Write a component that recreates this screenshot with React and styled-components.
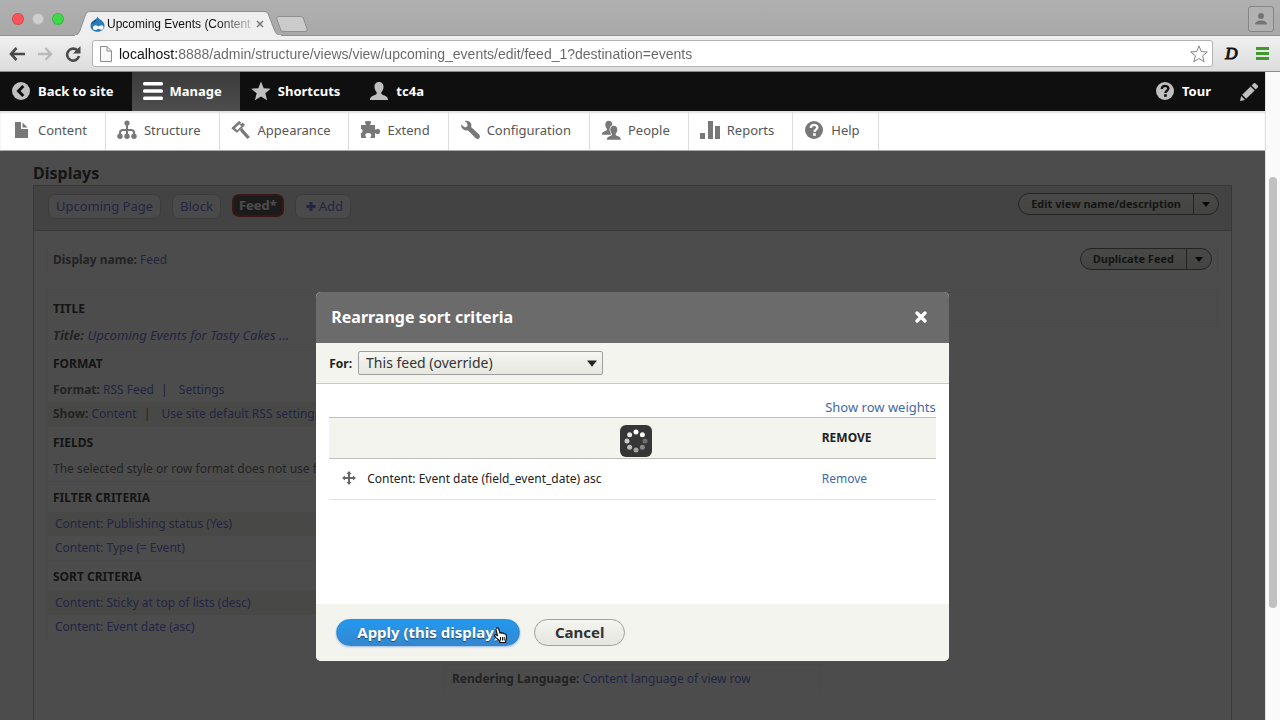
import React from 'react';
import styled, { createGlobalStyle, css } from 'styled-components';

const GlobalStyle = createGlobalStyle`
    * {
        box-sizing: border-box;
    }

    body {
        margin: 0;
        font-family: 'Noto Sans', 'Open Sans', sans-serif;
        font-size: 12px;
        color: #222;
    }

    button,
    input,
    select {
        font: inherit;
        margin: 0;
    }

    button {
        border: 0;
        padding: 0;
        background: none;
        cursor: pointer;
    }

    a {
        text-decoration: none;
    }

    svg {
        display: block;
        flex: none;
    }
`;

/* ---------- Browser window ---------- */

const Window = styled.div`
    display: flex;
    flex-direction: column;
    height: 100vh;
    overflow: hidden;
    background: #fff;
`;

const TabStrip = styled.div`
    display: flex;
    align-items: flex-end;
    height: 36px;
    padding: 0 6px 0 12px;
    background: linear-gradient(#b0b0b0, #a8a8a8);
    box-shadow: inset 0 -1px #8e8e8e;
    font-family: 'Liberation Sans', Arial, sans-serif;
`;

const Lights = styled.div`
    display: flex;
    gap: 8px;
    margin-bottom: 11px;
    width: 62px;
`;

const Light = styled.button`
    width: 12px;
    height: 12px;
    border-radius: 50%;
    background: ${(props) => props.$color};
    box-shadow: 0 0 0 1px rgba(0, 0, 0, 0.12) inset;
`;

const Tab = styled.div`
    position: relative;
    display: flex;
    align-items: center;
    width: 208px;
    height: 25px;
    padding: 0 18px 0 16px;
    gap: 2px;

    > svg.shape {
        position: absolute;
        inset: 0;
    }

    > *:not(.shape) {
        position: relative;
    }

    .title {
        flex: 1;
        white-space: nowrap;
        font-size: 12px;
        line-height: 16px;
        color: #111;
        mask-image: linear-gradient(to right, #000 75%, rgba(0, 0, 0, 0.2) 98%);
    }
`;

const NewTab = styled.button`
    margin: 0 auto 4px -6px;
`;

const Profile = styled.button`
    display: flex;
    align-items: center;
    justify-content: center;
    width: 26px;
    height: 26px;
    margin-bottom: 4px;
    border: 1px solid #858585;
    border-radius: 3px;
    background: #b1b1b1;
`;

const NavBar = styled.div`
    display: flex;
    align-items: center;
    height: 36px;
    padding: 0 11px 0 8px;
    background: linear-gradient(#f0f0f0, #dcdcdc);
    border-bottom: 1px solid #8a8a8a;

    .nav {
        width: 28px;
        display: flex;
    }
`;

const Address = styled.div`
    display: flex;
    align-items: center;
    flex: 1;
    height: 27px;
    padding: 0 4px 0 7px;
    gap: 7px;
    background: #fff;
    border: 1px solid #b3b3b3;
    border-radius: 3px;

    input {
        flex: 1;
        min-width: 0;
        padding: 0;
        border: 0;
        outline: 0;
        font-family: 'Liberation Sans', Arial, sans-serif;
        font-size: 14px;
        color: transparent;
        background: linear-gradient(to right, #111 59px, #666 59px);
        background-clip: text;
    }
`;

const Extension = styled.button`
    width: 43px;
    padding-right: 6px;
    font-family: 'Liberation Serif', serif;
    font-size: 17px;
    font-style: italic;
    line-height: 20px;
    color: #111;
    -webkit-text-stroke: 1px #111;
`;

const Viewport = styled.div`
    display: flex;
    flex: 1;
    min-height: 0;
`;

const Scrollbar = styled.div`
    display: grid;
    grid-template-rows: 105fr 431fr 112fr;
    width: 15px;
    padding: 0 3px;
    background: #fafafa;
    border-left: 1px solid #e2e2e2;

    div {
        grid-row: 2;
        border-radius: 4px;
        background: #c1c1c1;
    }
`;

const Page = styled.div`
    display: flex;
    flex-direction: column;
    flex: 1;
    min-width: 0;
`;

/* ---------- Admin toolbar ---------- */

const Toolbar = styled.nav`
    display: flex;
    height: 39px;
    flex: none;
    background: #0f0f0f;
`;

const ToolbarItem = styled.a`
    display: flex;
    align-items: center;
    gap: 7px;
    padding: 0 18px 1px 11px;
    color: #fff;
    font-size: 13px;
    font-weight: bold;
    white-space: nowrap;

    svg {
        color: ${(props) => (props.$active ? '#fff' : '#bfbfbf')};
    }

    ${(props) =>
        props.$active &&
        css`
            background: linear-gradient(#3a3a3a, #4e4e4e);
        `}

    ${(props) =>
        props.$right &&
        css`
            margin-left: auto;
        `}
`;

const PencilItem = styled.button`
    padding: 0 6px 0 10px;
    color: #bfbfbf;
`;

const Tray = styled.nav`
    position: relative;
    display: flex;
    height: 40px;
    flex: none;
    background: #fff;
    border-bottom: 1px solid #aaa;
    box-shadow: inset 0 2px 2px rgba(0, 0, 0, 0.12);
`;

const TrayItem = styled.a`
    display: flex;
    align-items: center;
    gap: 7px;
    padding: 0 18px 1px 11px;
    border-right: 1px solid #ddd;
    color: #565656;
    font-size: 13px;
    white-space: nowrap;

    svg {
        color: #787878;
    }
`;

/* ---------- Views edit form ---------- */

const Main = styled.main`
    position: relative;
    flex: 1;
    min-height: 0;
    overflow: hidden;
    padding: 11px 33px 0;

    h1 {
        margin: 0;
        font-size: 16px;
        line-height: 23px;
        color: #464646;
    }

    a {
        color: #747ce0;
    }
`;

const Displays = styled.section`
    min-height: 100%;
    border: 1px solid #bbb;
`;

const DisplayBar = styled.div`
    display: flex;
    align-items: flex-start;
    gap: 11px;
    padding: 7px 12px 0 14px;
    height: 45px;
    background: #e0e0e0;
    border-bottom: 1px solid #bbb;
`;

const DisplayTab = styled.button`
    display: flex;
    align-items: center;
    gap: 3px;
    height: 25px;
    margin-top: 1px;
    padding: 0 7px 1px;
    border: 1px solid #ccc;
    border-radius: 7px;
    background: #f9f9f9;
    color: #747ce0;
    font-size: 13px;
    white-space: nowrap;

    ${(props) =>
        props.$active &&
        css`
            height: 23px;
            border: 2px solid #c54a43;
            padding: 0 5px 1px;
            background: #5a5a5a;
            color: #fff;
            font-weight: bold;
        `}
`;

const DropButton = styled.div`
    display: flex;
    height: 22px;
    margin-left: auto;
    border: 1px solid #777;
    border-radius: 11px;
    background: linear-gradient(#f3f3ee, #e2e2da);
    color: #4a4a4a;

    button {
        padding: 0 12px 1px;
        color: inherit;
        font-size: 11px;
        font-weight: bold;
        white-space: nowrap;
    }

    button + button {
        display: flex;
        align-items: center;
        padding: 0 8px;
        border-left: 1px solid #777;
    }
`;

const DisplayName = styled.div`
    display: flex;
    align-items: flex-start;
    height: 24px;
    margin: 17px 13px 0;
    padding-right: 5px;
    border: solid #f2f2f2;
    border-width: 0 1px;
`;

const Columns = styled.div`
    display: grid;
    grid-template-columns: repeat(3, 1fr);
    gap: 20px;
    margin: 20px 13px 0;
`;

const Column = styled.div`
    display: flex;
    flex-direction: column;
    justify-content: ${(props) => (props.$bottom ? 'flex-end' : 'flex-start')};
    min-height: 399px;
    min-width: 0;
`;

const Bucket = styled.section`
    border: 1px solid #f4f4f4;
    border-bottom: 0;
    padding-top: 2px;

    h2 {
        margin: 0;
        padding-left: 5px;
        font-size: 12px;
        line-height: 28px;
        text-transform: uppercase;
        color: #464646;
    }
`;

const EmptyBucket = styled.section`
    height: 32px;
    border: 1px solid #f4f4f4;
`;

const Setting = styled.div`
    height: 24px;
    padding: 0 ${(props) => (props.$indent ? 7 : 5)}px;
    overflow: hidden;
    white-space: nowrap;
    line-height: 24px;
    color: #757575;
    background: ${(props) => (props.$shaded ? '#f2f4ee' : 'transparent')};

    ${(props) =>
        props.$italic &&
        css`
            font-size: 13px;
            font-style: italic;
        `}

    .bar {
        margin: 0 8px 0 4px;
    }
`;

/* ---------- Modal ---------- */

const Overlay = styled.div`
    position: absolute;
    inset: 0;
    display: flex;
    justify-content: center;
    align-items: flex-start;
    padding-top: 141px;
    background: rgba(0, 0, 0, 0.7);
`;

const Dialog = styled.div`
    width: 50%;
    min-width: 480px;
    border-radius: 5px;
    overflow: hidden;
    background: #fff;

    a {
        color: #3f69a5;
    }
`;

const DialogHeader = styled.header`
    display: flex;
    align-items: center;
    justify-content: space-between;
    height: 51px;
    padding: 0 21px 2px 15px;
    background: #6b6b6b;
    color: #fff;

    h2 {
        margin: 0;
        font-size: 16px;
    }
`;

const OverrideBar = styled.div`
    display: flex;
    align-items: center;
    gap: 6px;
    height: 41px;
    padding: 0 13px;
    background: #f3f4ee;
    border-bottom: 1px solid #c9cac5;

    label {
        font-weight: bold;
    }
`;

const SelectBox = styled.div`
    position: relative;

    select {
        appearance: none;
        display: block;
        width: 245px;
        height: 24px;
        padding: 0 24px 1px 7px;
        border: 1px solid #a0a0a0;
        border-radius: 2px;
        background: linear-gradient(#f6f6f3, #e7e7df);
        color: #333;
        font-size: 14px;
    }

    svg {
        position: absolute;
        right: 6px;
        top: 9px;
        pointer-events: none;
    }
`;

const DialogContent = styled.div`
    position: relative;
    height: 220px;
    padding: 13px 13px 0;

    .weights {
        display: block;
        text-align: right;
        font-size: 13px;
        line-height: 20px;
    }
`;

const SortTable = styled.table`
    width: 100%;
    border-collapse: collapse;

    th,
    td {
        height: 41px;
        padding: 0 0 2px;
        text-align: left;
        border-bottom: 1px solid #e0e0e0;
    }

    th {
        border: solid #bfbfba;
        border-width: 1px 0;
        background: #f3f4ee;
        text-transform: uppercase;
    }

    th:last-child {
        width: 114px;
    }

    .field {
        display: flex;
        align-items: center;
        gap: 11px;
        padding-left: 13px;
    }
`;

const Throbber = styled.div`
    position: absolute;
    left: 48%;
    top: 41px;
    width: 32px;
    height: 32px;
    border-radius: 6px;
    background: #363636;
`;

const DialogFooter = styled.footer`
    display: flex;
    align-items: center;
    gap: 14px;
    height: 57px;
    padding: 0 20px;
    background: #f3f4ee;
`;

const ActionButton = styled.button`
    position: relative;
    height: 27px;
    padding: 0 20px 1px;
    border: 1px solid #a0a09c;
    border-radius: 14px;
    background: linear-gradient(#f5f5f1, #e6e6df);
    color: #333;
    font-size: 15px;
    font-weight: bold;
    line-height: 24px;
    white-space: nowrap;

    ${(props) =>
        props.$primary &&
        css`
            border-color: #2a8bd3;
            background: linear-gradient(#2398ee, #3587cf);
            color: #fff;
            text-shadow: 0 1px 1px rgba(0, 0, 0, 0.5);
            box-shadow: 0 1px 2px rgba(70, 130, 220, 0.5);
        `}

    svg {
        position: absolute;
        right: 12px;
        top: 7px;
    }
`;

/* ---------- Icons ---------- */

const Icon = ({ size = 20, children }) => (
    <svg width={size} height={size} viewBox="0 0 20 20" fill="currentColor">
        {children}
    </svg>
);

const PersonShape = () => (
    <path d="M10 1c3 0 4.600 2.200 4.500 5-.1 2.400-1.100 4-2.100 5.300-.5 1 .1 1.900 1.200 2.400 2.600 1.100 5.400 1.700 5.400 5.300H1c0-3.600 2.800-4.200 5.400-5.300 1.100-.5 1.700-1.400 1.200-2.400C6.600 10 5.600 8.400 5.500 6 5.400 3.200 7 1 10 1z" />
);

const QuestionShape = ({ hole }) => (
    <>
        <circle cx="10" cy="10" r="9" />
        <path
            d="M6.800 8c0-2 1.400-3.100 3.300-3.100S13.400 6 13.400 7.600c0 2-2.900 2.200-2.900 4.400"
            fill="none"
            stroke={hole}
            strokeWidth="2.400"
        />
        <rect x="9.100" y="13.200" width="2.700" height="2.600" fill={hole} />
    </>
);

const BackIcon = () => (
    <Icon>
        <circle cx="10" cy="10" r="9" />
        <path
            d="M12.300 5L7.500 10l4.800 5"
            fill="none"
            stroke="#0f0f0f"
            strokeWidth="3"
        />
    </Icon>
);

const MenuIcon = () => (
    <Icon>
        <rect y="1" width="20" height="3.500" rx="1.500" />
        <rect y="8.300" width="20" height="3.500" rx="1.500" />
        <rect y="15.500" width="20" height="3.500" rx="1.500" />
    </Icon>
);

const StarIcon = () => (
    <Icon>
        <path d="M10 .5l2.700 6.700 7 .5-5.400 4.600 1.800 7L10 15.500l-6.100 3.800 1.800-7L.3 7.700l7-.5z" />
    </Icon>
);

const PencilIcon = () => (
    <Icon>
        <path d="M1 19l1.200-5 3.900 3.900zM3.200 12.800L11.600 4.400l4 4-8.400 8.400zM12.600 3.400l2-2c.6-.6 1.300-.6 1.900 0l2.200 2.200c.6.6.6 1.300 0 1.900l-2 2z" />
    </Icon>
);

const ContentIcon = () => (
    <Icon>
        <path d="M4 2h6v7h7v9H4z" />
        <path d="M11.500 2.500l5 5h-5z" />
    </Icon>
);

const StructureIcon = () => (
    <Icon>
        <circle cx="10" cy="3" r="2.600" />
        <path
            d="M10 4v12M3 16v-3.500Q3 10 6 10h8q3 0 3 2.500V16"
            fill="none"
            stroke="currentColor"
            strokeWidth="2"
        />
        <circle cx="3" cy="16.300" r="2.700" />
        <circle cx="10" cy="16.300" r="2.700" />
        <circle cx="17" cy="16.300" r="2.700" />
    </Icon>
);

const AppearanceIcon = () => (
    <Icon>
        <path
            d="M.8 8.300L8 1.500l1.500 1-1 1.200 1.800.5 1.200-1.200 2 2.100L6 12.300z"
            stroke="currentColor"
            strokeWidth="1"
        />
        <path d="M4 8.300L8.300 4.300l2 1.900L6.200 10.200z" fill="#fff" />
        <path
            d="M10 9l1.700 2.400 6 6.600"
            fill="none"
            stroke="currentColor"
            strokeWidth="3.200"
        />
    </Icon>
);

const ExtendIcon = () => (
    <Icon>
        <path d="M1 5h4.800c.4-1-.8-1.600-.8-2.800C5 1 6 1 8 1s3 0 3 1.200c0 1.200-1.200 1.800-.8 2.800H15v4.500c1 .5 1.500-.8 2.700-.8 1.500 0 2.300 1 2.300 2.800s-.8 2.700-2.300 2.700c-1.200 0-1.700-1.200-2.700-.8V18h-4.500c-.5-1 .8-1.500.8-2.800 0-1.400-1.200-2.200-3-2.200s-3 .8-3 2.200c0 1.300 1.300 1.800.8 2.800H1v-5c1 0 1.500-.8 1.500-2S2 9 1 9z" />
    </Icon>
);

const WrenchIcon = () => (
    <Icon>
        <path d="M1 4.600L5.200 7.600 7.600 6 7 2.800 4.600 1c3-.8 6 .5 6.700 3.200.2 1 .1 2-.2 2.800l8 7.600c1.200 1.300 1 2.800 0 3.700s-2.600.8-3.600-.4l-7.700-7.600C4.500 11.200 1 9 1 4.600z" />
    </Icon>
);

const PeopleIcon = () => (
    <Icon>
        <g transform="scale(.78)">
            <PersonShape />
        </g>
        <g transform="translate(5 5) scale(.78)" stroke="#fff" strokeWidth="2">
            <PersonShape />
        </g>
        <g transform="translate(5 5) scale(.78)">
            <PersonShape />
        </g>
    </Icon>
);

const ReportsIcon = () => (
    <Icon>
        <rect x="0" y="13" width="5" height="6" />
        <rect x="8" y="1" width="5" height="18" />
        <rect x="15" y="6" width="5" height="13" />
    </Icon>
);

const DropIcon = () => (
    <svg width="15" height="16" viewBox="0 0 15 16">
        <path
            d="M7.500.5c.5 1.800 2 2.500 3.800 3.700 2 1.400 3.200 3.200 3.200 5.500 0 3.500-3 6-7 6s-7-2.500-7-6c0-2.300 1.200-4 3.200-5.300C5.500 3.200 7 2.500 7.500.5z"
            fill="#2a7cba"
        />
        <path d="M1 8.500C1.500 6 5 4.800 6.500 3 6 6 3 7 1 8.500z" fill="#0f4f83" />
        <path
            d="M3 11.700c0-1.600 1.200-2.500 2.600-2.500 1.500 0 2.200 1.200 3 1.200s1.500-1.200 2.800-1.200 2.100.9 2.100 2.300-1 2.300-2.200 2.300c-1.200 0-1.800-1-2.700-1s-1.700 1.200-3.200 1.200S3 13.200 3 11.700z"
            fill="#fff"
        />
    </svg>
);

const Caret = ({ width = 8, height = 5 }) => (
    <svg width={width} height={height} viewBox="0 0 8 5" fill="#222">
        <path d="M0 0h8L4 5z" />
    </svg>
);

const HandCursor = () => (
    <svg width="13" height="17" viewBox="0 0 13 17">
        <path
            d="M2.500 1c1-.5 1.800 0 2.200 1L6 6c.8-.7 1.500-.4 2 .3.700-.6 1.500-.3 2 .5 1.200-.3 2 .4 2.300 1.700.4 2 .2 3.500-.6 5v2H5.700v-1.700L2 10.600C1 9.500 0 8.700.7 8 1.600 7.300 2.700 8 3.600 9L2 3c-.2-.8 0-1.600.5-2z"
            fill="#fff"
            stroke="#111"
            strokeWidth="1.200"
        />
        <path d="M6.500 10v3.500M8.500 10v3.500M10.200 10v3.500" stroke="#111" strokeWidth="1" />
    </svg>
);

const THROBBER_DOTS = ['#fff', '#fff', '#6e6e6e', '#858585', '#a3a3a3', '#bbb', '#ccc', '#e6e6e6'];

const ThrobberDots = () => (
    <svg width="32" height="32" viewBox="0 0 32 32">
        {THROBBER_DOTS.map((fill, index) => {
            const angle = (index * Math.PI) / 4;
            return (
                <circle
                    key={index}
                    cx={16 + 9 * Math.sin(angle)}
                    cy={16 - 9 * Math.cos(angle)}
                    r="2.500"
                    fill={fill}
                />
            );
        })}
    </svg>
);

const TRAY_ITEMS = [
    { label: 'Content', icon: <ContentIcon /> },
    { label: 'Structure', icon: <StructureIcon /> },
    { label: 'Appearance', icon: <AppearanceIcon /> },
    { label: 'Extend', icon: <ExtendIcon /> },
    { label: 'Configuration', icon: <WrenchIcon /> },
    { label: 'People', icon: <PeopleIcon /> },
    { label: 'Reports', icon: <ReportsIcon /> },
    {
        label: 'Help',
        icon: (
            <Icon>
                <QuestionShape hole="#fff" />
            </Icon>
        ),
    },
];

const BrowserChrome = () => (
    <>
        <TabStrip>
            <Lights>
                <Light $color="#f9545b" aria-label="Close window" />
                <Light $color="#cfcfcf" aria-label="Minimize window" />
                <Light $color="#3fd84b" aria-label="Zoom window" />
            </Lights>
            <Tab>
                <svg className="shape" width="208" height="25" viewBox="0 0 208 25">
                    <path
                        d="M0 25c4-1 5-3 6.500-7L11 5c1.200-3 2-4.500 5-4.500h174c3 0 4 1.500 5 4.500l5 13c1.500 4 3 6 8 7z"
                        fill="#efefef"
                        stroke="#8e8e8e"
                    />
                    <path d="M1 24.500h206" stroke="#efefef" />
                </svg>
                <DropIcon />
                <span className="title">Upcoming Events (Content</span>
                <button aria-label="Close tab">
                    <svg width="8" height="8" viewBox="0 0 8 8" stroke="#777" strokeWidth="1.500">
                        <path d="M1 1l6 6M7 1L1 7" />
                    </svg>
                </button>
            </Tab>
            <NewTab aria-label="New tab">
                <svg width="32" height="16" viewBox="0 0 32 16">
                    <path
                        d="M3 .5h21c2 0 3 .7 3.600 2.500l3.300 9.500c.7 2-.2 3-2 3H8c-2 0-3-.8-3.600-2.500L1 3.500C.4 1.500 1 .5 3 .5z"
                        fill="#cbcbcb"
                        stroke="#8e8e8e"
                    />
                </svg>
            </NewTab>
            <Profile aria-label="Profile">
                <svg width="14" height="14" viewBox="0 0 14 14" fill="#747474">
                    <circle cx="7" cy="4" r="3" />
                    <path d="M1 12.500C1 9.500 4 8.500 7 8.500s6 1 6 4z" />
                </svg>
            </Profile>
        </TabStrip>
        <NavBar>
            <button className="nav" aria-label="Back">
                <svg width="18" height="16" viewBox="0 0 18 16" fill="none" stroke="#4a4a4a" strokeWidth="2.600">
                    <path d="M8.500 2L3 8l5.500 6M3 8h14" />
                </svg>
            </button>
            <button className="nav" aria-label="Forward">
                <svg width="18" height="16" viewBox="0 0 18 16" fill="none" stroke="#b9b9b9" strokeWidth="2.400">
                    <path d="M9.500 2L15 8l-5.500 6M15 8H2" />
                </svg>
            </button>
            <button className="nav" aria-label="Reload">
                <svg width="18" height="16" viewBox="0 0 18 16" fill="none" stroke="#4a4a4a" strokeWidth="2.600">
                    <path d="M13.500 4.500A6 6 0 1 0 15 10" />
                    <path d="M16.500 0v7.500H9z" fill="#4a4a4a" stroke="none" />
                </svg>
            </button>
            <Address>
                <svg width="12" height="16" viewBox="0 0 12 16" fill="#f8f8f8" stroke="#8c8c8c">
                    <path d="M.5.500h6.500l4.500 4.500v10.500H.5zM7 .5V5h4.500" />
                </svg>
                <input
                    aria-label="Address"
                    defaultValue="localhost:8888/admin/structure/views/view/upcoming_events/edit/feed_1?destination=events"
                />
                <svg width="18" height="18" viewBox="0 0 20 20" fill="none" stroke="#777" strokeLinejoin="round">
                    <path d="M10 1l2.500 6.300 6.700.4-5.200 4.300 1.700 6.600-5.700-3.600-5.700 3.600L6 12 .8 7.700l6.700-.4z" />
                </svg>
            </Address>
            <Extension aria-label="Extension">D</Extension>
            <button aria-label="Menu">
                <svg width="13" height="13" viewBox="0 0 13 13" fill="#3f9a2c">
                    <path d="M0 0h13v3H0zM0 5h13v3H0zM0 10h13v3H0z" />
                </svg>
            </button>
        </NavBar>
    </>
);

const AdminToolbar = () => (
    <>
        <Toolbar>
            <ToolbarItem href="#">
                <BackIcon />
                Back to site
            </ToolbarItem>
            <ToolbarItem href="#" $active>
                <MenuIcon />
                Manage
            </ToolbarItem>
            <ToolbarItem href="#">
                <StarIcon />
                Shortcuts
            </ToolbarItem>
            <ToolbarItem href="#">
                <Icon>
                    <PersonShape />
                </Icon>
                tc4a
            </ToolbarItem>
            <ToolbarItem href="#" $right>
                <Icon>
                    <QuestionShape hole="#0f0f0f" />
                </Icon>
                Tour
            </ToolbarItem>
            <PencilItem aria-label="Edit">
                <PencilIcon />
            </PencilItem>
        </Toolbar>
        <Tray>
            {TRAY_ITEMS.map((item) => (
                <TrayItem href="#" key={item.label}>
                    {item.icon}
                    {item.label}
                </TrayItem>
            ))}
        </Tray>
    </>
);

const SplitButton = ({ label }) => (
    <DropButton>
        <button>{label}</button>
        <button aria-label="List additional actions">
            <Caret />
        </button>
    </DropButton>
);

const ViewForm = () => (
    <>
        <h1>Displays</h1>
        <Displays>
            <DisplayBar>
                <DisplayTab>Upcoming Page</DisplayTab>
                <DisplayTab>Block</DisplayTab>
                <DisplayTab $active>Feed*</DisplayTab>
                <DisplayTab>
                    <svg width="13" height="9" viewBox="0 0 13 9" fill="currentColor">
                        <path d="M6.500 0h3v3h3v3h-3v3h-3V6h-3V3h3z" />
                    </svg>
                    Add
                </DisplayTab>
                <SplitButton label="Edit view name/description" />
            </DisplayBar>
            <DisplayName>
                <Setting as="span">
                    <b>Display name:</b> <a href="#">Feed</a>
                </Setting>
                <SplitButton label="Duplicate Feed" />
            </DisplayName>
            <Columns>
                <Column>
                    <Bucket>
                        <h2>Title</h2>
                        <Setting $italic>
                            <b>Title:</b> <a href="#">Upcoming Events for Tasty Cakes ...</a>
                        </Setting>
                    </Bucket>
                    <Bucket>
                        <h2>Format</h2>
                        <Setting>
                            <b>Format:</b> <a href="#">RSS Feed</a>
                            <span className="bar"> | </span>
                            <a href="#">Settings</a>
                        </Setting>
                        <Setting $shaded>
                            <b>Show:</b> <a href="#">Content</a>
                            <span className="bar"> | </span>
                            <a href="#">Use site default RSS settings</a>
                        </Setting>
                    </Bucket>
                    <Bucket>
                        <h2>Fields</h2>
                        <Setting>The selected style or row format does not use fields.</Setting>
                    </Bucket>
                    <Bucket>
                        <h2>Filter criteria</h2>
                        <Setting $indent $shaded>
                            <a href="#">Content: Publishing status (Yes)</a>
                        </Setting>
                        <Setting $indent>
                            <a href="#">Content: Type (= Event)</a>
                        </Setting>
                    </Bucket>
                    <Bucket>
                        <h2>Sort criteria</h2>
                        <Setting $indent $shaded>
                            <a href="#">Content: Sticky at top of lists (desc)</a>
                        </Setting>
                        <Setting $indent>
                            <a href="#">Content: Event date (asc)</a>
                        </Setting>
                    </Bucket>
                </Column>
                <Column $bottom>
                    <Bucket>
                        <Setting $indent>
                            <b>Rendering Language:</b> <a href="#">Content language of view row</a>
                        </Setting>
                    </Bucket>
                </Column>
                <Column>
                    <EmptyBucket />
                </Column>
            </Columns>
        </Displays>
    </>
);

const RearrangeDialog = () => (
    <Dialog role="dialog" aria-labelledby="dialog-title">
        <DialogHeader>
            <h2 id="dialog-title">Rearrange sort criteria</h2>
            <button aria-label="Close">
                <svg width="14" height="14" viewBox="0 0 14 14" stroke="#fff" strokeWidth="3.400" strokeLinecap="round">
                    <path d="M3 3l8 8M11 3l-8 8" />
                </svg>
            </button>
        </DialogHeader>
        <OverrideBar>
            <label htmlFor="override">For:</label>
            <SelectBox>
                <select id="override" defaultValue="feed">
                    <option value="feed">This feed (override)</option>
                </select>
                <Caret width={10} height={7} />
            </SelectBox>
        </OverrideBar>
        <DialogContent>
            <a href="#" className="weights">
                Show row weights
            </a>
            <SortTable>
                <thead>
                    <tr>
                        <th aria-label="Field" />
                        <th>Remove</th>
                    </tr>
                </thead>
                <tbody>
                    <tr>
                        <td>
                            <div className="field">
                                <svg width="14" height="14" viewBox="0 0 14 14" fill="#666">
                                    <path d="M7 0l2.500 3H8v3h3V4.500L14 7l-3 2.500V8H8v3h1.500L7 14l-2.500-3H6V8H3v1.500L0 7l3-2.500V6h3V3H4.500z" />
                                </svg>
                                Content: Event date (field_event_date) asc
                            </div>
                        </td>
                        <td>
                            <a href="#">Remove</a>
                        </td>
                    </tr>
                </tbody>
            </SortTable>
            <Throbber>
                <ThrobberDots />
            </Throbber>
        </DialogContent>
        <DialogFooter>
            <ActionButton $primary>
                Apply (this display)
                <HandCursor />
            </ActionButton>
            <ActionButton>Cancel</ActionButton>
        </DialogFooter>
    </Dialog>
);

export default function App() {
    return (
        <>
            <GlobalStyle />
            <Window>
                <BrowserChrome />
                <Viewport>
                    <Page>
                        <AdminToolbar />
                        <Main>
                            <ViewForm />
                            <Overlay>
                                <RearrangeDialog />
                            </Overlay>
                        </Main>
                    </Page>
                    <Scrollbar>
                        <div />
                    </Scrollbar>
                </Viewport>
            </Window>
        </>
    );
}
